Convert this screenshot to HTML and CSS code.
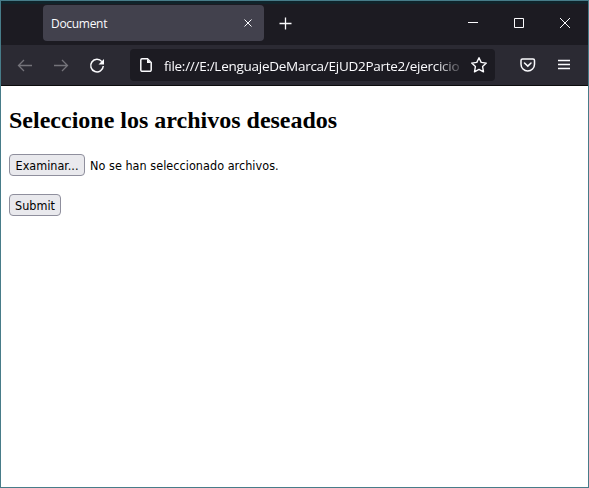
FILE: index.html
```html
<!DOCTYPE html>
<html lang="es">
<head>
<meta charset="utf-8">
<title>Document</title>
<link rel="stylesheet" href="styles.css">
</head>
<body>
<div class="window">
  <header class="tabbar">
    <div class="tab">
      <span class="tab-title">Document</span>
      <svg class="tab-close" width="10" height="10" viewBox="0 0 10 10"><path d="M1.500 1.500l7 7M8.500 1.500l-7 7"/></svg>
    </div>
    <svg class="new-tab" width="14" height="14" viewBox="0 0 14 14"><path d="M7.500 1.500v12M1.500 7.500h12"/></svg>
    <div class="controls">
      <svg width="46" height="40" viewBox="0 0 46 40"><path d="M18 17.500h10"/></svg>
      <svg width="46" height="40" viewBox="0 0 46 40"><path d="M18.500 13.500h9v9h-9z"/></svg>
      <svg width="46" height="40" viewBox="0 0 46 40"><path d="M18 13l10 10M28 13l-10 10"/></svg>
    </div>
  </header>
  <nav class="toolbar">
    <svg class="disabled" width="36" height="40" viewBox="0 0 36 40"><path d="M17.500 20.500H31M23 15l-5.500 5.500L23 26"/></svg>
    <svg class="disabled" width="36" height="40" viewBox="0 0 36 40"><path d="M17 20.500h13.500M25 15l5.500 5.500L25 26"/></svg>
    <svg class="reload" width="36" height="40" viewBox="0 0 36 40"><path d="M28.900 16.600A6.300 6.300 0 1 0 30.300 21"/><path class="solid" d="M31 14v5.500h-5.500z"/></svg>
    <div class="address">
      <svg class="page-icon" width="12" height="14" viewBox="0 0 12 14"><path d="M2 .8h5.500l3.700 3.700v7.500a1.300 1.300 0 0 1-1.300 1.300H2A1.300 1.300 0 0 1 .8 12V2A1.300 1.300 0 0 1 2 .8z"/><path class="solid" d="M7 1v4h4z"/></svg>
      <span class="url">file:///E:/LenguajeDeMarca/EjUD2Parte2/ejercicio</span>
      <svg class="star" width="18" height="18" viewBox="0 0 18 18"><path d="M9 1.700l2.200 4.700 5.100.7-3.700 3.500.9 5.200L9 13.400l-4.500 2.400.9-5.200-3.700-3.500 5.100-.7z"/></svg>
    </div>
    <svg class="pocket" width="16" height="14" viewBox="0 0 16 14"><path d="M2.500 1h10.500a1.500 1.500 0 0 1 1.500 1.500v3.700a6.700 6.700 0 0 1-13.500 0V2.500A1.500 1.500 0 0 1 2.500 1z"/><path d="M4.500 5l3.300 3.100L11 5"/></svg>
    <svg class="menu" width="12" height="12" viewBox="0 0 12 12"><path d="M0 1.500h12M0 5.500h12M0 9.500h12"/></svg>
  </nav>
  <main class="page">
    <h2>Seleccione los archivos deseados</h2>
    <form>
      <div class="file-row"><button class="browse" type="button">Examinar...</button><span class="file-status">No se han seleccionado archivos.</span></div>
      <button class="submit" type="button">Submit</button>
    </form>
  </main>
</div>
</body>
</html>
```
FILE: styles.css
```css
* { box-sizing: border-box; }
html, body { height: 100%; margin: 0; }
.window {
  height: 100vh;
  display: flex;
  flex-direction: column;
  border: 1px solid #477c89;
  background: #fff;
  overflow: hidden;
}
svg { flex: none; display: block; fill: none; stroke: #fbfbfe; }
svg .solid { fill: #fbfbfe; stroke: none; }
.tabbar {
  height: 44px;
  flex: none;
  display: flex;
  align-items: flex-start;
  padding: 1px 0 0 42px;
  border-top: 3px solid #10242b;
  background: #1c1b22;
}
.tab {
  width: 221px;
  height: 36px;
  display: flex;
  align-items: center;
  justify-content: space-between;
  padding: 0 11px 0 8px;
  border-radius: 4px;
  background: #42414d;
  color: #fbfbfe;
  font: 12px/18px "Open Sans", sans-serif;
}
.tab-title { letter-spacing: -.3px; padding-top: 2px; }
.tab-close { stroke-width: 1; }
.new-tab { margin: 11px 0 0 14px; stroke-width: 1.3; }
.controls { display: flex; margin-left: auto; }
.toolbar {
  height: 41px;
  flex: none;
  display: flex;
  align-items: center;
  border-bottom: 1px solid #0c0c0d;
  background: #2b2a33;
}
.disabled { stroke: #74737a; stroke-width: 1.3; }
.reload { stroke-width: 1.5; }
.address {
  width: 365px;
  height: 32px;
  display: flex;
  align-items: center;
  margin-left: 21px;
  padding: 0 7px 0 10px;
  border-radius: 4px;
  background: #1c1b22;
}
.page-icon { stroke-width: 1.5; }
.url {
  width: 299px;
  margin-left: 12px;
  padding-top: 2px;
  white-space: nowrap;
  color: #fbfbfe;
  font: 13.5px/20px "Open Sans", sans-serif;
  letter-spacing: -.27px;
  -webkit-mask-image: linear-gradient(to right, #000 272px, transparent 302px);
  mask-image: linear-gradient(to right, #000 272px, transparent 302px);
}
.star { margin-left: auto; stroke-width: 1.4; stroke-linejoin: round; }
.pocket { margin-left: 25px; stroke-width: 1.5; stroke-linecap: round; }
.menu { margin-left: 22px; stroke-width: 1.3; }
.page { flex: 1; padding: 0 8px; color: #000; }
h2 { margin: 20px 0; font: bold 24px/28px "Liberation Serif", serif; }
.file-row { display: flex; align-items: center; margin-bottom: 18px; }
button {
  height: 22px;
  padding: 2px 0 0;
  border: 1px solid #8f8f9d;
  border-radius: 4px;
  background: #e9e9ed;
  color: #000;
}
button, .file-status { font: 12.5px/18px "DejaVu Sans Condensed", "DejaVu Sans", sans-serif; white-space: nowrap; }
.browse { width: 76px; }
.submit { width: 52px; display: block; }
.file-status { margin-left: 5px; padding-top: 2px; letter-spacing: .04px; }
```
